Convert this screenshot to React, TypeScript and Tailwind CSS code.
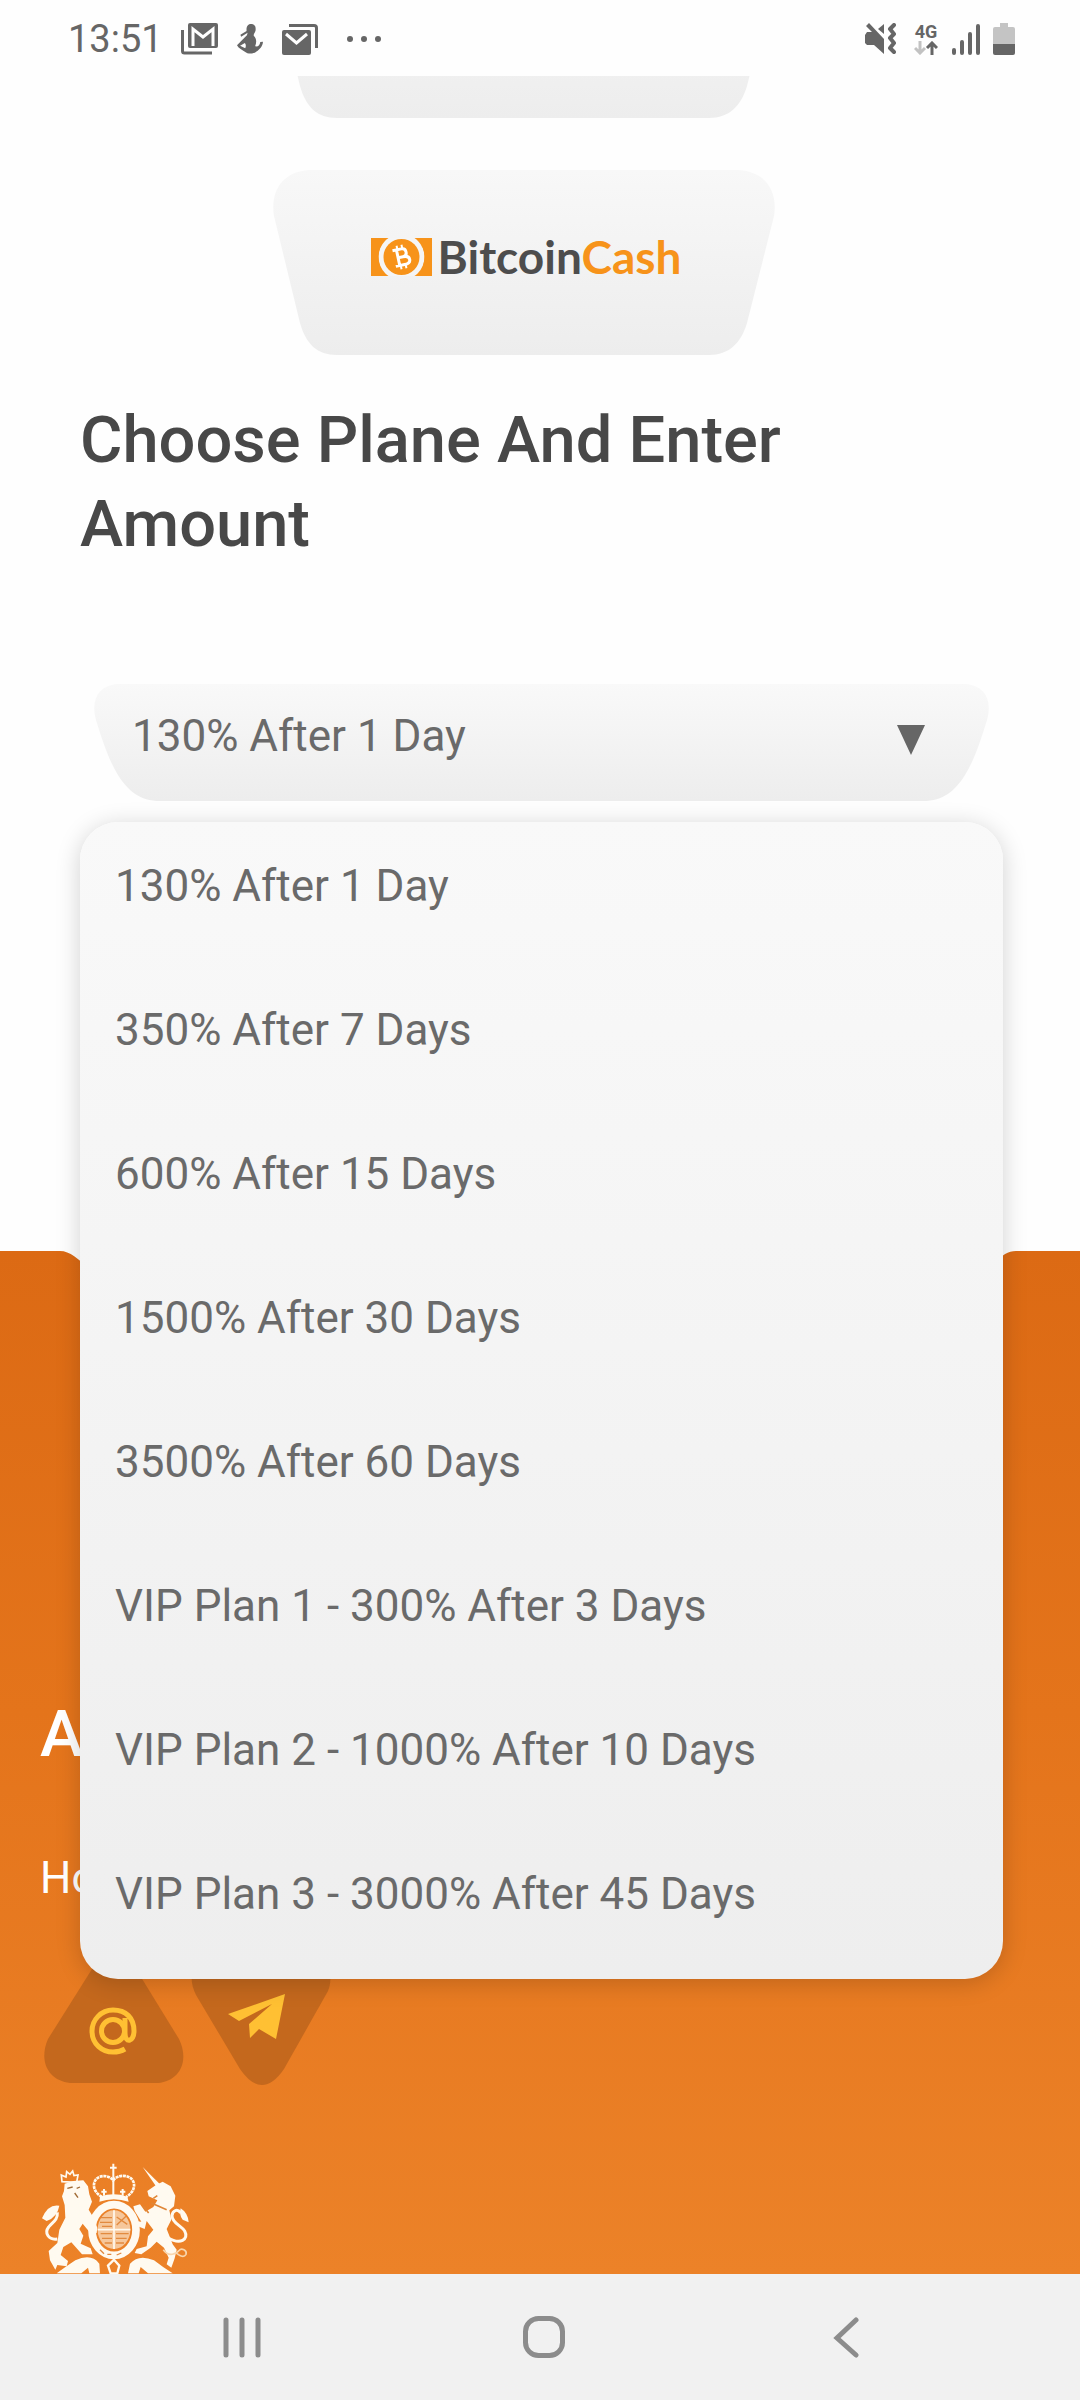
import { useState } from "react";

const plans = [
  "130% After 1 Day",
  "350% After 7 Days",
  "600% After 15 Days",
  "1500% After 30 Days",
  "3500% After 60 Days",
  "VIP Plan 1 - 300% After 3 Days",
  "VIP Plan 2 - 1000% After 10 Days",
  "VIP Plan 3 - 3000% After 45 Days",
];

function StatusBar() {
  return (
    <header className="relative z-10 flex h-[76px] shrink-0 items-center justify-between bg-[#fefefe] pt-[2px] pl-[68px] pr-[65px] text-[#666666]">
      <div className="flex items-center">
        <span className="w-[113px] text-[38px] leading-[48px]">13:51</span>
        <svg className="h-[32px] w-[37px]" viewBox="0 0 37 32" fill="none" stroke="currentColor">
          <path d="M1.5 7V28Q1.5 30 3.5 30H31" strokeWidth="3" />
          <rect x="7" y="0" width="30" height="25" rx="2" fill="currentColor" stroke="none" />
          <path d="M12 23V6L22 14L32 6V23" stroke="#fefefe" strokeWidth="3" />
        </svg>
        <svg className="ml-[19px] h-[30px] w-[26px]" viewBox="687 70 76 90" preserveAspectRatio="none" fill="currentColor">
          <path d="M728 70C740 70 743 80 741 91C739 97 735 100 736 105C744 113 745 124 740 137C749 139 754 133 755 124L763 123C762 137 752 147 745 152C737 160 719 161 710 153C701 147 691 143 687 134L708 112L716 104L718 96L699 108L697 102L715 91C714 80 717 70 728 70ZM710 127L696 135L711 143C714 137 713 131 710 127Z" />
        </svg>
        <svg className="ml-[19px] h-[31px] w-[36px]" viewBox="0 0 36 31" fill="none" stroke="currentColor">
          <path d="M7 1.500H32Q34.500 1.500 34.500 4V24" strokeWidth="3" />
          <rect x="0" y="6" width="29" height="25" rx="2" fill="currentColor" stroke="none" />
          <path d="M4 10L14.500 19L25 10" stroke="#fefefe" strokeWidth="3" />
        </svg>
        <svg className="ml-[28px] h-[8px] w-[36px]" viewBox="0 0 36 8" fill="currentColor">
          <circle cx="4" cy="4" r="3" />
          <circle cx="18" cy="4" r="3" />
          <circle cx="32" cy="4" r="3" />
        </svg>
      </div>
      <div className="flex items-center">
        <svg className="h-[32px] w-[31px]" viewBox="0 0 31 32" fill="currentColor">
          <path d="M0 12L2 9H7L1 3L4 0L19 16V31L9 22H2L0 20Z" />
          <path d="M13 6L19 1V11Z" />
          <path d="M29 2L25 6L29 11L25 15L29 20L25 25L29 29" fill="none" stroke="currentColor" strokeWidth="4" strokeLinecap="round" strokeLinejoin="round" />
        </svg>
        <div className="ml-[18px] flex w-[24px] flex-col items-center">
          <span className="text-[18px] leading-[18px] font-bold">4G</span>
          <svg className="h-[14px] w-[24px]" viewBox="0 0 24 14" fill="none" strokeWidth="3">
            <path d="M6 0V12M1 7L6 12L11 7" stroke="#c2c2c2" />
            <path d="M18 14V2M13 7L18 2L23 7" stroke="currentColor" />
          </svg>
        </div>
        <svg className="ml-[14px] h-[31px] w-[28px]" viewBox="0 0 28 31" fill="none" stroke="currentColor" strokeWidth="4" strokeLinecap="round">
          <path d="M2 26V29M10 18V29M18 10V29M26 2V29" />
        </svg>
        <svg className="ml-[13px] h-[32px] w-[22px]" viewBox="0 0 22 32">
          <path d="M7 0H15V4H20Q22 4 22 6V22H0V6Q0 4 2 4H7Z" fill="#c4c4c4" />
          <path d="M0 21H22V30Q22 32 20 32H2Q0 32 0 30Z" fill="currentColor" />
        </svg>
      </div>
    </header>
  );
}

function CardShape() {
  return (
    <svg className="absolute inset-0 h-full w-full" viewBox="0 0 502 185" preserveAspectRatio="none">
      <defs>
        <linearGradient id="card" x1="0" y1="0" x2="0" y2="1">
          <stop offset="0" stopColor="#f8f8f8" />
          <stop offset="1" stopColor="#ededed" />
        </linearGradient>
      </defs>
      <path
        d="M36 0H466C492 2 505 20 501 46L474 153C468 173 456 185 436 185H64C44 185 33 174 27 153L1 46C-3 20 10 2 36 0Z"
        fill="url(#card)"
      />
    </svg>
  );
}

function BitcoinCashLogo() {
  return (
    <div className="relative flex items-center gap-1.5 pb-3 pl-1">
      <svg className="h-[38px] w-[61px]" viewBox="0 0 61 38">
        <rect width="61" height="38" fill="#f7931a" />
        <circle cx="30.500" cy="19" r="23" fill="#f5f5f5" />
        <path d="M0 0H15C5 10 5 28 15 38H0ZM61 0H46C56 10 56 28 46 38H61Z" fill="#f7931a" />
        <circle cx="30.500" cy="19" r="18" fill="#f7931a" />
        <g transform="rotate(-12 30.500 19)" fill="none" stroke="#fff" strokeWidth="3">
          <path d="M27 11V27M23 11H32Q36 11 36 15T32 19H27M32 19Q38 19 38 23T32 27H23" />
          <path d="M28 7V11M33 7V11M28 27V31M33 27V31" strokeWidth="2" />
        </g>
      </svg>
      <span className="text-[46px] leading-[48px] font-bold font-[Lato,sans-serif]">
        <span className="text-[#4d4d4d]">Bitcoin</span>
        <span className="text-[#f7931a]">Cash</span>
      </span>
    </div>
  );
}

function PlanSelect() {
  const [plan, setPlan] = useState(plans[0]);

  return (
    <div className="relative mt-[118px]">
      <div className="relative mx-[14px] h-[117px]">
        <svg className="absolute inset-0 h-full w-full" viewBox="0 0 896 117" preserveAspectRatio="none">
          <defs>
            <linearGradient id="field" x1="0" y1="0" x2="0" y2="1">
              <stop offset="0" stopColor="#f9f9f9" />
              <stop offset="1" stopColor="#ededed" />
            </linearGradient>
          </defs>
          <path
            d="M22 0H874C890 2 900 14 894 36C886 62 880 78 872 91C862 107 850 117 830 117H66C46 117 34 107 24 91C16 78 10 62 2 36C-4 14 6 2 22 0Z"
            fill="url(#field)"
          />
        </svg>
        <select
          id="plan"
          value={plan}
          onChange={(e) => setPlan(e.target.value)}
          className="relative h-full w-full appearance-none bg-transparent pr-[100px] pb-[14px] pl-[38px] text-[44px] text-[#6a6a6a] outline-none"
        >
          {plans.map((p) => (
            <option key={p}>{p}</option>
          ))}
        </select>
        <svg className="pointer-events-none absolute top-[41px] right-[64px] h-[30px] w-[28px]" viewBox="0 0 28 30">
          <path d="M0 0H28L14 30Z" fill="#666666" />
        </svg>
      </div>

      <ul className="absolute inset-x-0 top-[138px] z-20 rounded-[38px] bg-linear-to-b from-[#f9f9f9] to-[#eeeeee] pb-[5px] shadow-[0_4px_24px_rgba(0,0,0,0.18)]">
        {plans.map((p) => (
          <li key={p}>
            <button
              type="button"
              onClick={() => setPlan(p)}
              className="block h-[144px] w-full px-[35px] pb-[16px] text-left text-[44px] text-[#6a6a6a]"
            >
              {p}
            </button>
          </li>
        ))}
      </ul>
    </div>
  );
}

function Crest() {
  return (
    <svg className="mt-[75px] h-[150px] w-[150px] shrink-0" viewBox="60 103 450 450" fill="#fffaf0">
      {/* crown */}
      <path d="M246 208C224 196 216 174 226 158C238 140 268 142 280 158C292 140 326 140 338 158C348 174 340 196 318 208" fill="none" stroke="#fffaf0" strokeWidth="8" strokeDasharray="9 2" />
      <path d="M280 108V205M270 120H290" stroke="#fffaf0" strokeWidth="6" />
      <path d="M252 184V204M308 184V204M244 192H260M300 192H316" stroke="#fffaf0" strokeWidth="6" />
      <path d="M240 207Q281 193 322 207L326 222Q281 207 238 222Z" />
      {/* garter and shield */}
      <ellipse cx="282" cy="307" rx="66" ry="76" fill="none" stroke="#fffaf0" strokeWidth="23" />
      <ellipse cx="282" cy="306" rx="49" ry="58" fill="#f6c79b" />
      <path d="M282 248V364M233 306H331" stroke="#fffaf0" strokeWidth="5" />
      <path d="M242 270H276M240 284H276M246 296H276M290 268L322 290M290 292L318 266M288 318H326M288 332H320M288 346H312M242 318H276M246 332H276M254 346H276" stroke="#e28a3f" strokeWidth="4" />
      <path d="M240 366L252 378M262 380H274M290 382L304 376" stroke="#e28a3f" strokeWidth="4" />
      {/* lion */}
      <path d="M126 162L124 142L138 148L140 132L150 140L158 130L162 144L174 142L170 164Z" fill="none" stroke="#fffaf0" strokeWidth="5" />
      <path d="M134 168L160 160L190 158L204 176L208 200L216 222L206 246L218 266L232 300L230 316L214 320L188 288L178 304L190 324L182 348L212 362L218 380L186 380L154 344L130 358L122 382L144 400L140 416L112 412L106 426L90 398L86 370L112 346L118 306L136 270L134 232L126 206L132 190Z" />
      <path d="M142 182L158 178M170 182L180 178M164 196L174 210" stroke="#a06a34" strokeWidth="4" />
      <path d="M112 334C86 338 72 316 86 298C96 284 114 278 112 254" fill="none" stroke="#fffaf0" strokeWidth="9" />
      <path d="M118 234Q84 228 66 272L80 280Q112 268 118 234Z" />
      {/* unicorn */}
      <path d="M368 118L420 170L408 176Z" />
      <path d="M408 172L428 162L452 176L466 204L462 236L448 248L454 276L440 304L448 324L458 350L470 366L464 392L454 420L440 410L446 390L432 360L410 342L392 360L364 380L344 376L350 364L380 356L384 326L400 306L380 280L374 304L350 294L346 280L364 282L344 250L340 236L360 230L376 252L400 238L412 218L386 206L382 190Z" />
      <path d="M394 226L440 246M400 212L412 204M370 236L386 256" stroke="#df8637" strokeWidth="5" />
      <path d="M444 330C480 352 508 336 494 310C484 294 456 286 456 264C458 248 472 242 482 256" fill="none" stroke="#fffaf0" strokeWidth="9" />
      <path d="M482 242Q504 256 506 284L488 276Q476 262 482 242Z" />
      <path d="M430 366C446 390 470 378 478 368C484 360 502 368 498 380C490 394 474 380 466 374" fill="none" stroke="#f8d6ae" strokeWidth="5" />
      {/* scroll */}
      <path d="M110 437Q136 418 166 398Q214 376 238 408L240 437H208L204 420L184 437Z" />
      <path d="M458 437Q430 420 402 398Q356 378 330 408L324 437H356L362 418L384 437Z" />
      <path d="M282 396L298 414L292 437H272L264 414Z" fill="none" stroke="#fffaf0" strokeWidth="7" />
    </svg>
  );
}

function SiteFooter() {
  return (
    <footer className="relative flex grow flex-col overflow-hidden bg-linear-to-b from-[#dc6a14] via-[#e4741b] via-45% to-[#ec8228] px-[40px]">
      <svg className="absolute inset-x-0 top-0 h-[40px] w-full" viewBox="0 0 1080 40" preserveAspectRatio="none">
        <path d="M60 0C70 0 78 8 90 18L110 40H970L995 12C1002 4 1008 0 1016 0Z" fill="#fefefe" />
      </svg>
      <h3 className="mt-[441px] text-[65px] leading-[84px] font-medium text-white">A</h3>
      <p className="mt-[72px] text-[44px] leading-[60px] text-white">Ho</p>
      <div className="mt-[37px] flex gap-[6px] pl-[2px]">
        <a href="#mail" aria-label="Email">
          <svg className="h-[140px] w-[142px]" viewBox="0 0 142 140">
            <path d="M50 24Q72 -10 94 24L137 94C148 117 137 136 116 138H28C7 136 -4 117 6 94Z" fill="#c4681d" />
            <g fill="none" stroke="#ffc033" strokeWidth="5">
              <circle cx="71" cy="86" r="11.500" />
              <path d="M83 73V88C83 99 92 97 92 86C92 73 84 65 71 65C59 65 50 75 50 86C50 99 60 107 71 107Q78 107 83 104" strokeLinejoin="round" />
            </g>
          </svg>
        </a>
        <a href="#telegram" aria-label="Telegram">
          <svg className="h-[142px] w-[142px]" viewBox="0 0 142 142">
            <path d="M24 10H118C136 14 145 28 138 46L94 124Q72 156 50 124L6 50C-5 28 6 12 24 10Z" fill="#c4681d" />
            <path d="M38 69L95 49L86 94L69 84L60 93L59 79L82 59L49 76Z" fill="#ffc033" />
          </svg>
        </a>
      </div>
      <Crest />
    </footer>
  );
}

function NavBar() {
  return (
    <nav className="z-30 flex h-[126px] shrink-0 items-center justify-between bg-[#f1f1f1] px-[221px]">
      <button type="button" aria-label="Recent apps">
        <svg className="h-[42px] w-[42px]" viewBox="0 0 42 42" fill="none" stroke="#8c8c8c" strokeWidth="5" strokeLinecap="round">
          <path d="M5 4V39M21 4V39M37 4V39" />
        </svg>
      </button>
      <button type="button" aria-label="Home">
        <svg className="h-[42px] w-[42px]" viewBox="0 0 42 42" fill="none" stroke="#8c8c8c" strokeWidth="5">
          <rect x="2.500" y="2.500" width="37" height="37" rx="13" />
        </svg>
      </button>
      <button type="button" aria-label="Back">
        <svg className="h-[42px] w-[34px]" viewBox="0 0 34 42" fill="none" stroke="#8c8c8c" strokeWidth="5" strokeLinecap="round">
          <path d="M31 4L12 22L31 39" />
        </svg>
      </button>
    </nav>
  );
}

export default function App() {
  return (
    <div className="flex h-screen flex-col overflow-hidden bg-[#fefefe] font-[Roboto,sans-serif]">
      <StatusBar />
      <main className="flex min-h-0 grow flex-col overflow-hidden">
        <section className="pb-[450px]">
          <div className="flex flex-col items-center gap-[52px] pr-[32px]">
            <div className="relative -mt-[143px] h-[185px] w-[502px]">
              <CardShape />
            </div>
            <div className="relative flex h-[185px] w-[502px] items-center justify-center">
              <CardShape />
              <BitcoinCashLogo />
            </div>
          </div>
          <div className="pr-[77px] pl-[80px]">
            <h2 className="mt-[43px] max-w-[760px] text-[65px] leading-[84px] font-medium text-[#484848]">
              <label htmlFor="plan">Choose Plane And Enter Amount</label>
            </h2>
            <PlanSelect />
          </div>
        </section>
        <SiteFooter />
      </main>
      <NavBar />
    </div>
  );
}
